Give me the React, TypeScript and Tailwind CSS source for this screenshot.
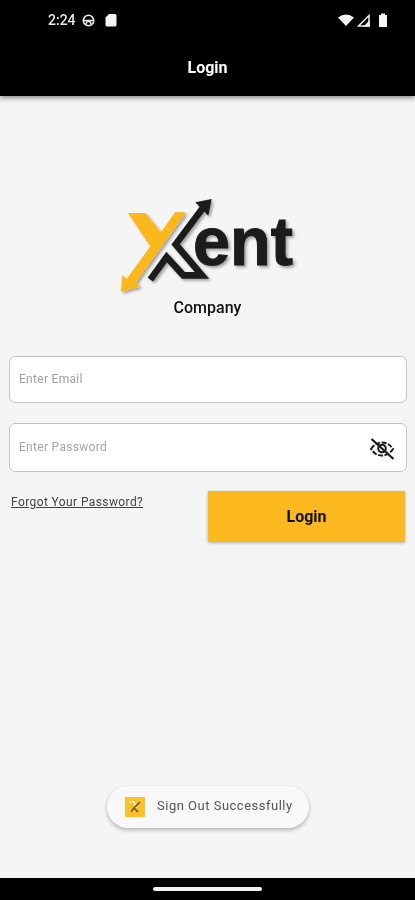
import React from "react";

function Logo() {
  return (
    <svg width="210" height="113" viewBox="0 0 630 339" className="block">
      <defs>
        <filter id="s" x="-20%" y="-20%" width="140%" height="140%">
          <feDropShadow dx="6" dy="6" stdDeviation="5" floodColor="#000" floodOpacity="0.35" />
        </filter>
      </defs>
      <g filter="url(#s)">
        <path
          d="M81 84 L133 84 L180 142 L222 82 L255 82 L188 176 L105 292 L117 305 L60 320 L63 270 L77 282 L148 184 Z"
          fill="#fbb81f"
        />
        <path
          d="M305 70 L224 178 L303 271 L247 271 L197 216 L148 284"
          fill="none"
          stroke="#1b1b1b"
          strokeWidth="20"
          strokeLinejoin="miter"
        />
        <path d="M283 52 L332 42 L322 92 Z" fill="#1b1b1b" />
      </g>
      <text
        x="276"
        y="240"
        fill="#1b1b1b"
        stroke="#1b1b1b"
        strokeWidth="3"
        filter="url(#s)"
        style={{ fontFamily: '"Liberation Sans", sans-serif', fontWeight: 700, fontSize: 205 }}
        textLength="300"
        lengthAdjust="spacingAndGlyphs"
      >
        ent
      </text>
    </svg>
  );
}

function EyeOff() {
  return (
    <svg width="26" height="26" viewBox="0 0 26 26" fill="none" stroke="#1a1a1a" strokeWidth="2" className="block mt-[2px]">
      <path d="M2 13 C5.5 8 9 6.5 13 6.5 C17 6.5 20.5 8 24 13 C20.5 18 17 19.5 13 19.5 C9 19.5 5.5 18 2 13 Z" strokeDasharray="5 1.5" />
      <circle cx="13" cy="12.5" r="3.8" />
      <path d="M2.5 3 L24.5 23" strokeWidth="2.2" />
    </svg>
  );
}

export default function App() {
  return (
    <div className="w-[415px] h-[900px] flex flex-col bg-[#f5f5f5] overflow-hidden font-['Roboto',sans-serif] blur-[0.4px]">
      <header className="h-[96px] bg-black shrink-0 flex flex-col shadow-[0_2px_5px_rgba(0,0,0,0.45)] relative">
        <div className="h-[40px] pl-[48px] pr-[27px] flex items-center justify-between text-[#e8e8e8]">
          <div className="flex items-center gap-[5px]">
            <span className="text-[14px] font-medium leading-none">2:24</span>
            <svg width="13" height="13" viewBox="0 0 13 13" fill="none" stroke="#e8e8e8" strokeWidth="1.6" className="ml-[1px]">
              <circle cx="6.5" cy="6.5" r="5.2" />
              <path d="M1.5 6.5 H11.5 M4 10 L5 7.5 H8 L9 10" />
            </svg>
            <svg width="12" height="14" viewBox="0 0 12 14" className="ml-[5px]">
              <path d="M4 1 H10 Q11.5 1 11.5 2.5 V12 Q11.5 13.5 10 13.5 H2 Q0.5 13.5 0.5 12 V4.5 Z" fill="#f2f2f2" />
            </svg>
          </div>
          <div className="flex items-center gap-[3px]">
            <svg width="16" height="12" viewBox="0 0 16 12"><path d="M0 3.5 Q8 -2.5 16 3.5 L8 12 Z" fill="#f5f5f5" /></svg>
            <svg width="13" height="13" viewBox="0 0 13 13" fill="none" stroke="#eeeeee" strokeWidth="1.5"><path d="M1.5 12 L12 1.5 V12 Z" /><path d="M8 12 L12 8 V12 Z" fill="#eeeeee" /></svg>
            <svg width="10" height="14" viewBox="0 0 10 14" className="ml-[5px]"><path d="M3 0.5 H7 V2 H9 V14 H1 V2 H3 Z" fill="#f5f5f5" /></svg>
          </div>
        </div>
        <div className="flex-1 flex items-start justify-center pt-[18px]">
          <h1 className="text-white text-[16px] font-bold leading-[20px]">Login</h1>
        </div>
      </header>

      <main className="flex-1 flex flex-col px-[9px] min-h-0">
        <div className="self-center mt-[89px] ml-[-3px]">
          <Logo />
        </div>
        <p className="text-center text-[16px] font-medium leading-[20px] text-[#111]">Company</p>

        <div className="mt-[38px] h-[47px] w-[398px] rounded-[6px] border-[1.5px] border-[#c4c4c4] bg-white flex items-center pl-[9px]">
          <span className="text-[12px] tracking-[0.3px] text-[#9e9e9e] mt-[-1px]">Enter Email</span>
        </div>
        <div className="mt-[20px] h-[49px] w-[398px] rounded-[6px] border-[1.5px] border-[#c4c4c4] bg-white flex items-center justify-between pl-[9px] pr-[11px]">
          <span className="text-[12px] tracking-[0.3px] text-[#a6a6a6] mt-[-2px]">Enter Password</span>
          <EyeOff />
        </div>

        <div className="mt-[19px] flex items-start justify-between pr-[1px]">
          <a className="ml-[2px] mt-[3px] text-[12px] leading-[16px] tracking-[0.4px] underline text-[#444]">Forgot Your Password?</a>
          <button className="w-[197px] h-[51px] bg-[#fbb81f] text-[16px] font-bold text-[#111] shadow-[0_1px_3px_rgba(0,0,0,0.3)]">Login</button>
        </div>

        <div className="mt-auto mb-[50px] self-center w-[202px] h-[42px] ml-[1px] rounded-full bg-[#f8f8f9] shadow-[0_2px_4px_rgba(0,0,0,0.28)] flex items-center pl-[18px]">
          <div className="w-[20px] h-[20px] bg-[#fbc02d] flex items-center justify-center rounded-[1px]">
            <svg width="16" height="16" viewBox="0 0 16 16" fill="none" strokeWidth="1.5">
              <path d="M2 3 H7 L9 8 L3 13" stroke="#fff3c4" />
              <path d="M13 3 L7 9 L11 13 M7 9 L4 13" stroke="#6b5310" />
            </svg>
          </div>
          <span className="ml-[12px] text-[13px] leading-[20px] tracking-[0.5px] text-[#555] mt-[-2px]">Sign Out Successfully</span>
        </div>
      </main>

      <footer className="h-[22px] bg-black shrink-0 flex items-center justify-center">
        <div className="w-[109px] h-[4px] rounded-full bg-[#f2f2f2] mt-[-1px]" />
      </footer>
    </div>
  );
}
